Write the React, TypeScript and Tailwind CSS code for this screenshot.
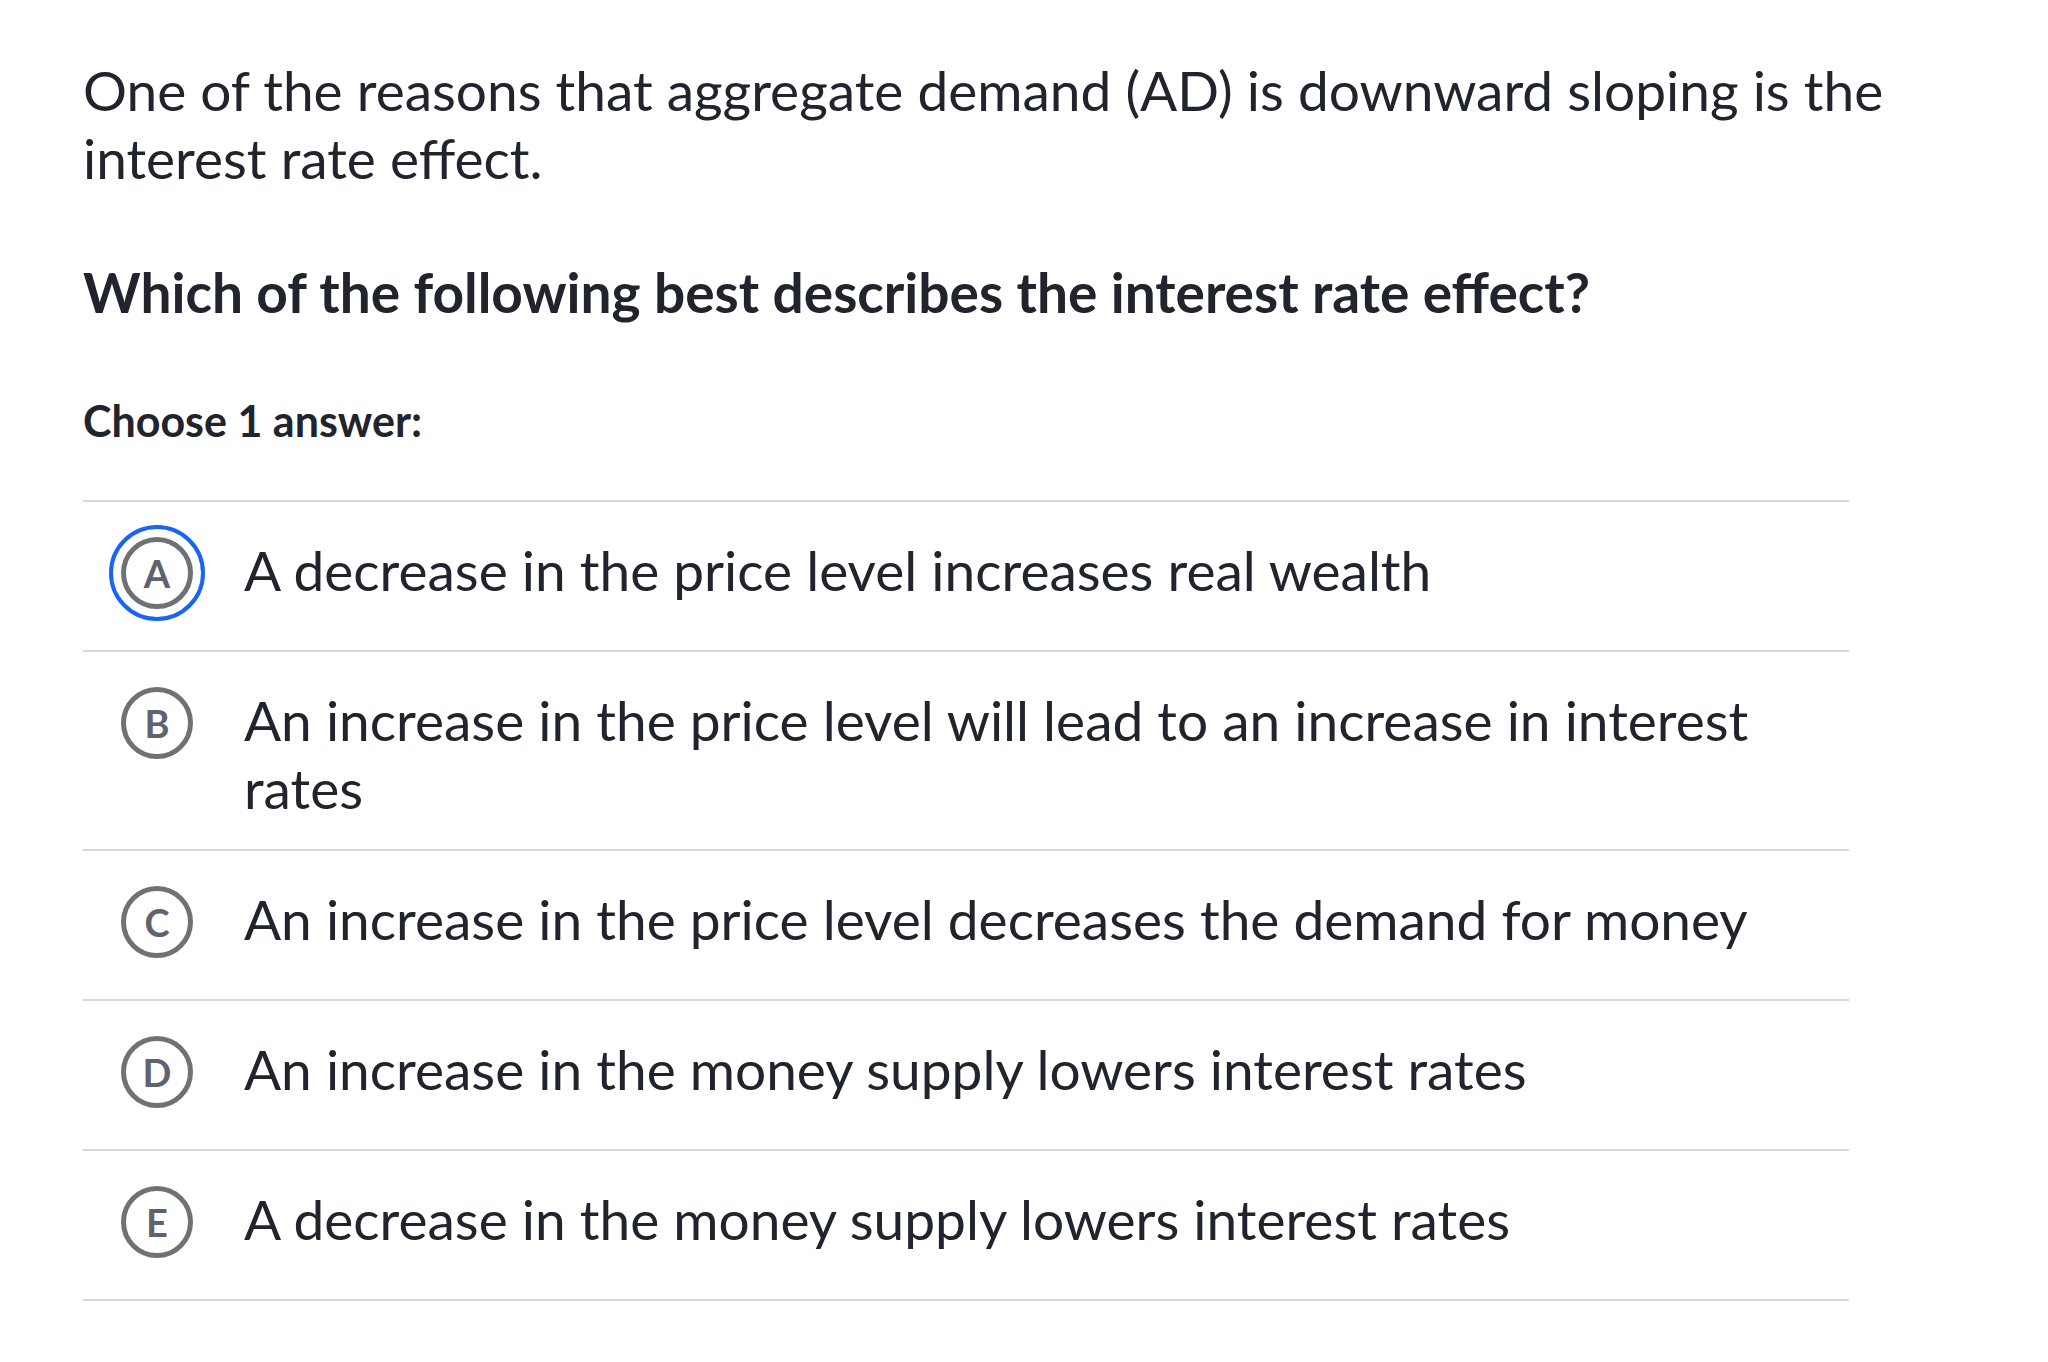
import React from 'react'

const choices = [
    { letter: 'A', text: 'A decrease in the price level increases real wealth', selected: true },
    { letter: 'B', text: 'An increase in the price level will lead to an increase in interest rates' },
    { letter: 'C', text: 'An increase in the price level decreases the demand for money' },
    { letter: 'D', text: 'An increase in the money supply lowers interest rates' },
    { letter: 'E', text: 'A decrease in the money supply lowers interest rates' },
]

const Choice = ({ letter, text, selected }: { letter: string; text: string; selected?: boolean }) => {
    return (
        <li className="flex min-h-[150px] items-start border-b-2 border-[#d6d8da] pt-[34px] pb-[27px]">
            <div className="relative ml-[38px] mt-[1px] h-[72px] w-[72px] shrink-0">
                {selected && (
                    <span className="absolute -inset-[12px] rounded-full border-[4px] border-[#1865f2]" />
                )}
                <span className="flex h-full w-full items-center justify-center rounded-full border-[5px] border-[#707174] text-[38px] font-bold leading-none text-[#5f6370]">
                    {letter}
                </span>
            </div>
            <div className="ml-[51px] flex-1 pr-[20px] text-[55px] leading-[68px] text-[#21242c]">
                {text}
            </div>
        </li>
    )
}

export default function App() {
    return (
        <div className="min-h-[1362px] w-[2048px] bg-white pl-[83px] pt-[56px] font-['Lato','Open_Sans',sans-serif]">
            <p className="w-[1900px] text-[55px] leading-[68px] text-[#21242c]">
                One of the reasons that aggregate demand (AD) is downward sloping is the interest rate effect.
            </p>
            <h2 className="mt-[66px] text-[55px] font-bold leading-[68px] text-[#21242c]">
                Which of the following best describes the interest rate effect?
            </h2>
            <div className="mt-[73px] text-[43px] font-bold leading-[44px] text-[#21242c]">
                Choose 1 answer:
            </div>
            <ul className="mt-[57px] w-[1766px] border-t-2 border-[#d6d8da]">
                {choices.map((c) => (
                    <Choice key={c.letter} {...c} />
                ))}
            </ul>
        </div>
    )
}
